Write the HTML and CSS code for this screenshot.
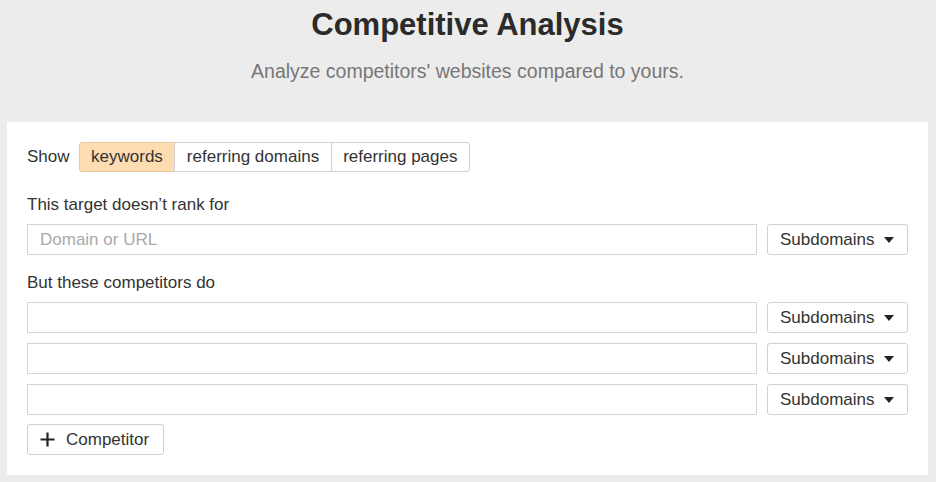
FILE: index.html
```html
<!DOCTYPE html>
<html lang="en">
  <head>
    <meta charset="UTF-8" />
    <meta name="viewport" content="width=device-width, initial-scale=1.0" />
    <title>Competitive Analysis</title>
    <link rel="stylesheet" href="styles.css">
  </head>
  <body>
    <div class="header">
      <h1>Competitive Analysis</h1>
      <p class="subtitle">Analyze competitors' websites compared to yours.</p>
    </div>

    <div class="card">
      <div class="show-row">
        <span class="show-label">Show</span>
        <div class="segments">
          <button class="segment active">keywords</button>
          <button class="segment">referring domains</button>
          <button class="segment">referring pages</button>
        </div>
      </div>

      <div class="field-label">This target doesn’t rank for</div>
      <div class="target-row">
        <input type="text" class="url-input" placeholder="Domain or URL" />
        <button class="select">Subdomains <span class="caret"></span></button>
      </div>

      <div class="field-label">But these competitors do</div>
      <div class="competitors">
        <div class="target-row">
          <input type="text" class="url-input" />
          <button class="select">Subdomains <span class="caret"></span></button>
        </div>
        <div class="target-row">
          <input type="text" class="url-input" />
          <button class="select">Subdomains <span class="caret"></span></button>
        </div>
        <div class="target-row">
          <input type="text" class="url-input" />
          <button class="select">Subdomains <span class="caret"></span></button>
        </div>
      </div>

      <button class="add-btn">
        <svg width="15" height="15" viewBox="0 0 15 15">
          <path d="M7.5 0.5v14M0.5 7.5h14" stroke="#222" stroke-width="2.2" fill="none" />
        </svg>
        Competitor
      </button>
    </div>
  </body>
</html>
```

FILE: styles.css
```css
body {
  font-family: "Liberation Sans", Arial, sans-serif;
  margin: 0;
  padding: 0 8px 0 7px;
  background-color: #ececec;
  color: #333;
}
.header {
  text-align: center;
  padding-top: 6px;
  height: 116px;
  box-sizing: border-box;
}
h1 {
  margin: 0;
  font-size: 31px;
  line-height: 38px;
  color: #2b2b2b;
}
.subtitle {
  margin: 15px 0 0;
  font-size: 19.5px;
  line-height: 24px;
  color: #777;
}
.card {
  background-color: white;
  padding: 20px;
  margin-top: 6px;
}
.show-row {
  display: flex;
  align-items: center;
  gap: 9px;
  height: 30px;
  margin-bottom: 23px;
}
.show-label {
  font-size: 17px;
  color: #333;
}
.segments {
  display: flex;
}
button {
  font-family: inherit;
  font-size: 17px;
  color: #333;
  background-color: white;
  border: 1px solid #d0d0d0;
  border-radius: 3px;
  cursor: pointer;
}
.segment {
  height: 30px;
  padding: 0 11.5px;
  border-radius: 0;
  margin-left: -1px;
}
.segment:first-child {
  border-radius: 3px 0 0 3px;
  margin-left: 0;
}
.segment:last-child {
  border-radius: 0 3px 3px 0;
}
.segment.active {
  background-color: #fddcb2;
  border-color: #ebc9a0;
}
.field-label {
  font-size: 17px;
  line-height: 20px;
  margin-bottom: 9px;
}
.target-row {
  display: flex;
  gap: 10px;
  margin-bottom: 18px;
}
.competitors .target-row {
  margin-bottom: 10px;
}
.competitors .target-row:last-child {
  margin-bottom: 9px;
}
.url-input {
  flex: 1;
  height: 31px;
  box-sizing: border-box;
  border: 1px solid #d4d4d4;
  padding: 0 12px;
  font-family: inherit;
  font-size: 17px;
  color: #333;
}
.url-input::placeholder {
  color: #aaa;
}
.select {
  width: 141px;
  height: 31px;
  padding: 0 12px;
  display: flex;
  align-items: center;
  justify-content: space-between;
}
.caret {
  width: 0;
  height: 0;
  border-left: 5px solid transparent;
  border-right: 5px solid transparent;
  border-top: 6px solid #222;
  margin-right: 1px;
}
.add-btn {
  height: 31px;
  padding: 0 14px 0 12px;
  display: flex;
  align-items: center;
  gap: 11px;
}
```
